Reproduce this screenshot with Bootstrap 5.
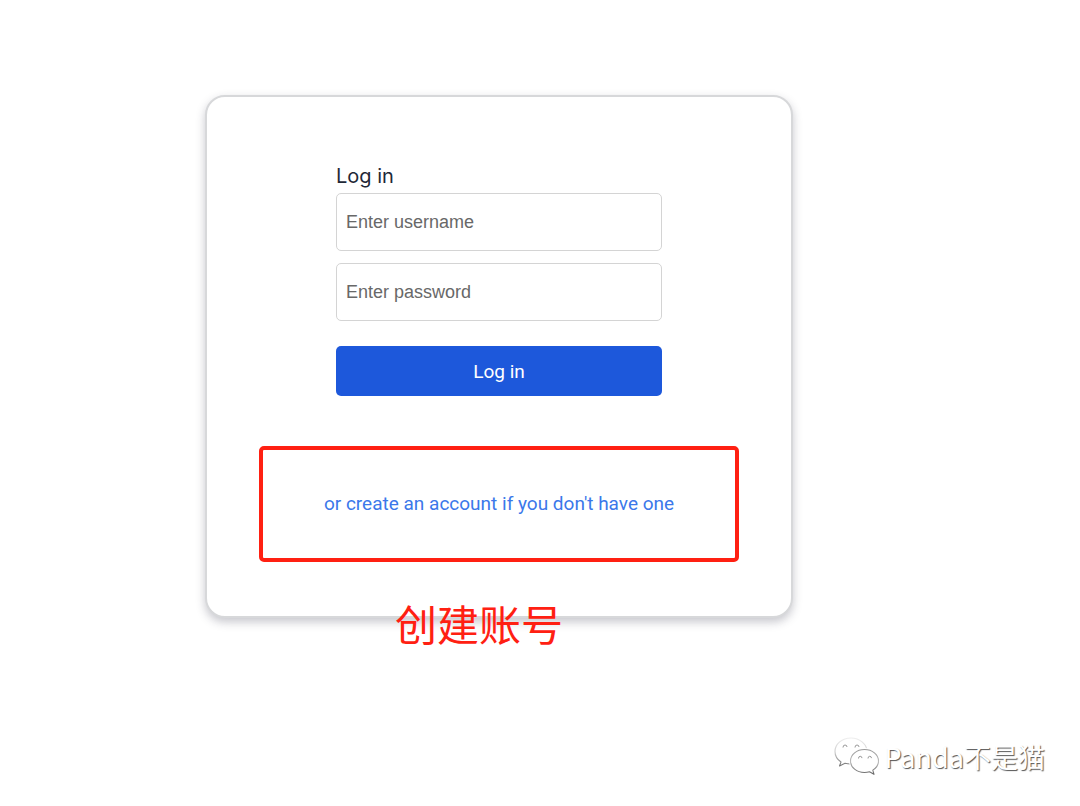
<!DOCTYPE html>
<html lang="en">
<head>
<meta charset="utf-8">
<meta name="viewport" content="width=device-width, initial-scale=1">
<title>Log in</title>
<link href="https://cdn.jsdelivr.net/npm/bootstrap@5.3.0/dist/css/bootstrap.min.css" rel="stylesheet">
<style>
  body { font-family: Roboto, "Noto Sans CJK SC", sans-serif; background: #fff; color: #1f2937; }
  .page-main { padding: 95px 82px 0 0; }
  .login-card { width: 100%; max-width: 588px; padding: 64px 52px 54px; border: 2px solid #d7d8da; border-radius: 20px; box-shadow: 0 4px 10px rgba(40, 40, 60, .26); }
  .login-form { width: 100%; max-width: 326px; }
  .login-title { padding-bottom: 2px; font: 400 20px/30px Inter, sans-serif; color: #1f2937; }
  .login-input { height: 58px; padding: 0 9px; font: 18px "Liberation Sans", Arial, sans-serif; border: 1px solid #d4d4d4; border-radius: 5px; }
  .login-input::placeholder { color: #686868; }
  .login-btn { height: 50px; margin-top: 13px; padding: 8px 12px 6px; background: #1d58db; color: #fff; font-size: 19px; border: 0; border-radius: 5px; }
  .login-btn:hover { background: #1a4fc5; color: #fff; }
  .login-form .login-input { margin-bottom: 12px; }
  .signup-box { height: 116px; margin-top: 50px; border: 4px solid #ff2012; border-radius: 5px; }
  .signup-link { font-size: 19px; color: #3b78ea; }
  .note { left: 188px; bottom: -41px; font-size: 42px; line-height: 60px; color: #ff2012; white-space: nowrap; }
  .watermark { right: 35px; bottom: 29px; gap: 5px; font: 27px/40px "Noto Sans CJK SC", sans-serif; color: #fff; text-shadow: 1px 1px 1px #555; }
</style>
</head>
<body class="min-vh-100 position-relative">
<main class="page-main d-flex justify-content-center">
  <section class="login-card card position-relative">
    <form class="login-form mx-auto d-flex flex-column">
      <h1 class="login-title m-0">Log in</h1>
      <input class="login-input form-control" type="text" placeholder="Enter username" aria-label="Username">
      <input class="login-input form-control" type="password" placeholder="Enter password" aria-label="Password">
      <button class="login-btn btn w-100" type="submit">Log in</button>
    </form>
    <div class="signup-box d-flex align-items-center justify-content-center">
      <a class="signup-link text-decoration-none" href="#">or create an account if you don't have one</a>
    </div>
    <div class="note position-absolute" lang="zh">创建账号</div>
  </section>
</main>
<footer class="watermark position-absolute d-flex align-items-center" lang="zh">
  <svg width="46" height="40" viewBox="0 0 46 40" aria-hidden="true">
    <defs>
      <linearGradient id="rim" x1="0" y1="0" x2="0" y2="1"><stop offset="0" stop-color="#eee"/><stop offset=".5" stop-color="#ccc"/><stop offset="1" stop-color="#777"/></linearGradient>
      <linearGradient id="rim2" x1="0" y1="0" x2="0" y2="1"><stop offset="0" stop-color="#999"/><stop offset=".5" stop-color="#bbb"/><stop offset="1" stop-color="#666"/></linearGradient>
    </defs>
    <g fill="#fff" stroke-width="1.100" stroke-linejoin="round">
      <path stroke="url(#rim)" d="M17 1C8 1 1 7 1 14.500c0 4.300 2.200 8 6 10.500L5.500 29l5.500-2.800c2 .6 4 .8 6 .8 9 0 16-5.500 16-12.500S26 1 17 1z"/>
      <path stroke="#fff" stroke-width="3" d="M30.500 12.500c-7.700 0-14 5-14 11.500s6.300 11.500 14 11.500c7.700 0 14-5 14-11.500s-6.300-11.500-14-11.500z"/>
      <path stroke="url(#rim2)" d="M30.500 12.500c-7.700 0-14 5-14 11.500s6.300 11.500 14 11.500c1.700 0 3.400-.3 5-.8l4.500 2.600-1.200-4.200c3.600-2.200 5.700-5.200 5.700-9.100 0-6.500-6.300-11.500-14-11.500z"/>
    </g>
    <g fill="none" stroke="#999" stroke-width="1">
      <path d="M9 10.500q0-2.500 2-2.500t2 2M21 10.500q0-2.500 2-2.500t2 2M24.500 21.500q0-2.200 1.700-2.200t1.800 1.800M34 21.500q0-2.200 1.700-2.200t1.800 1.800"/>
    </g>
  </svg>
  <span>Panda不是猫</span>
</footer>
<script src="https://cdn.jsdelivr.net/npm/bootstrap@5.3.0/dist/js/bootstrap.bundle.min.js"></script>
</body>
</html>
